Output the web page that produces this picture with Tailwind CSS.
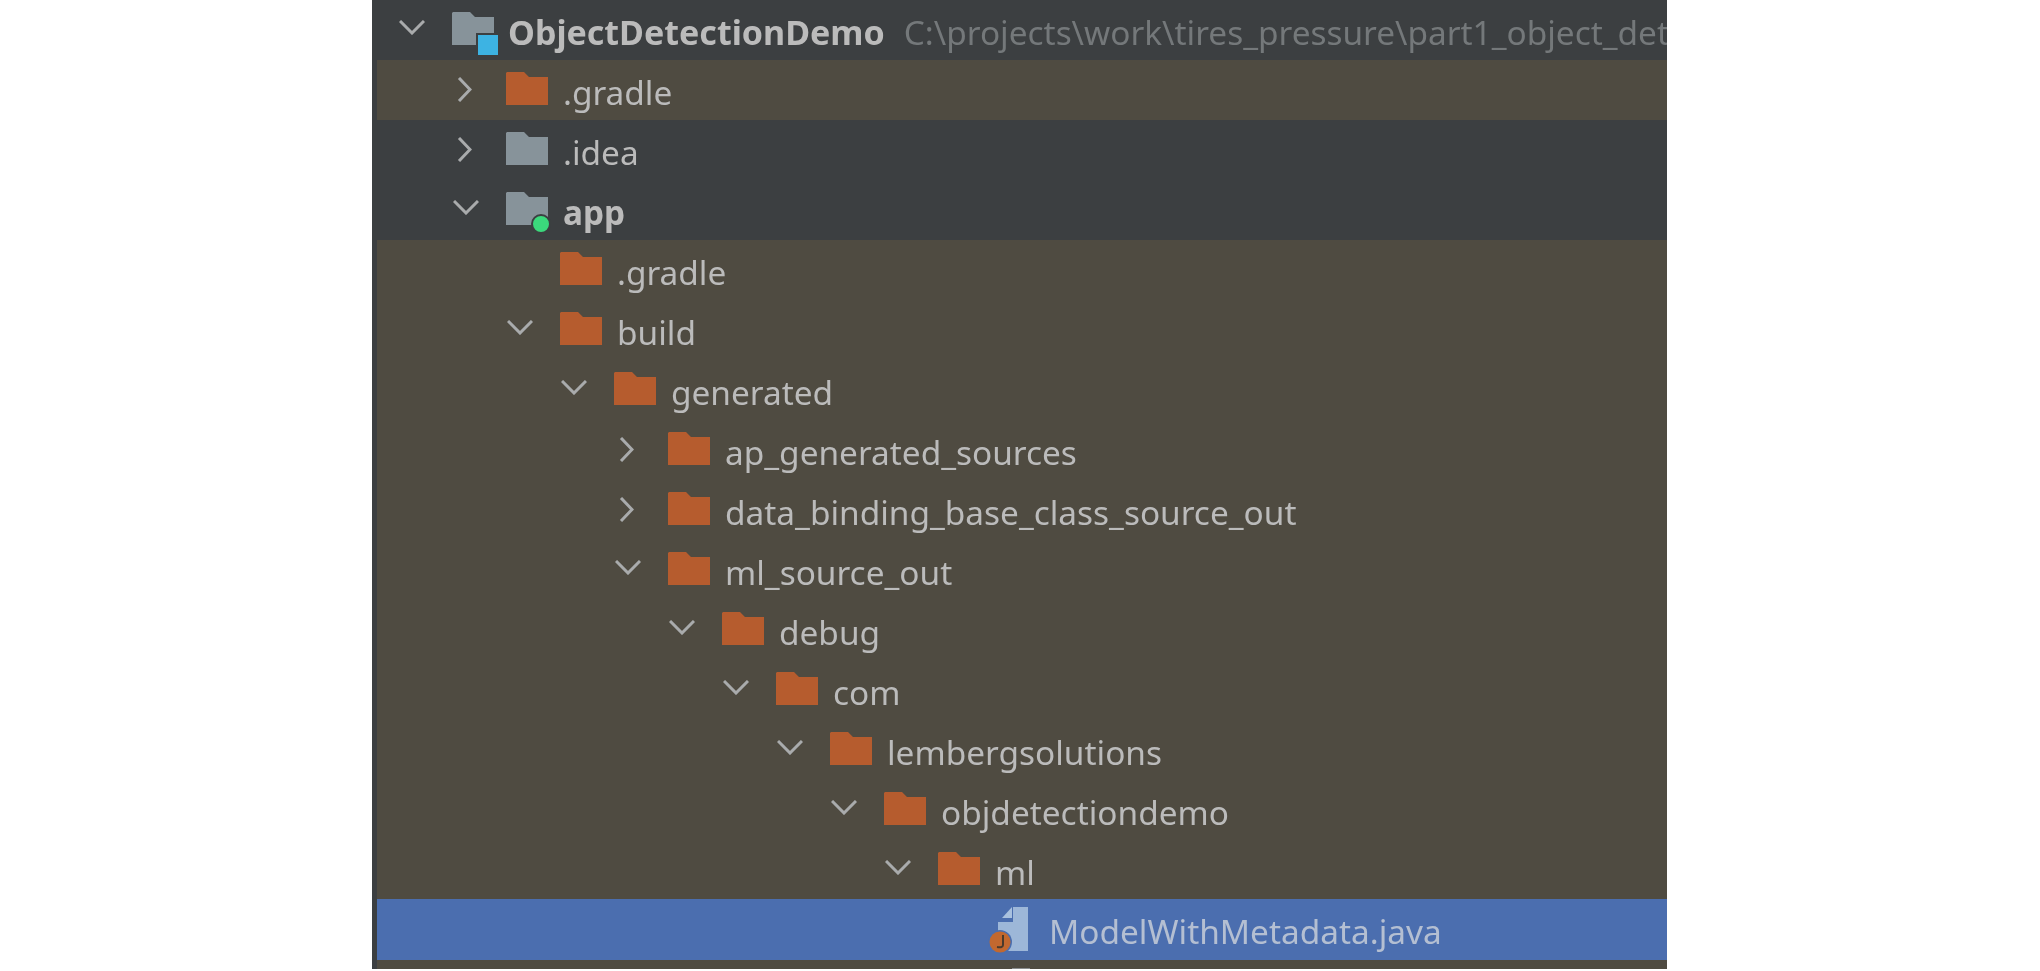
<!DOCTYPE html>
<html><head><meta charset="utf-8"><script src="https://cdn.jsdelivr.net/npm/@tailwindcss/browser@4"></script></head>
<body class="bg-white">
<svg width="0" height="0" class="absolute"><defs>
<symbol id="f" viewBox="0 0 42 33"><path d="M1 0H18L23 5H42V33H0V1Z"/></symbol>
<symbol id="r" viewBox="0 0 15 25"><path d="M2 1L13 12.500L2 24" fill="none" stroke="#a9abac" stroke-width="3"/></symbol>
<symbol id="d" viewBox="0 0 26 15"><path d="M1 1L13 13L25 1" fill="none" stroke="#a9abac" stroke-width="3"/></symbol>
</defs></svg>
<main class="ml-[372px] w-[1295px] h-[969px] overflow-hidden bg-[#4f4b41] border-l-[5px] border-[#3c3f41] font-['Noto_Sans',sans-serif] text-[33.4px] leading-[64px] text-[#bbbbbb] blur-[0.7px]">
 <div class="flex h-[60px] pl-[21px] bg-[#3c3f41] whitespace-nowrap">
  <div class="w-[54px] shrink-0 pt-[20px]"><svg class="w-[26px] h-[15px] ml-[1px]"><use href="#d"/></svg></div>
  <div class="relative w-[56px] shrink-0 pt-[12px]"><svg class="w-[42px] h-[33px] fill-[#87939a]"><use href="#f"/></svg><span class="absolute left-[24px] top-[33px] w-[24px] h-[24px] bg-[#3db3e3] border-2 border-[#3c3f41]"></span></div>
  <span class="font-bold text-[34px]">ObjectDetectionDemo</span><span class="ml-[19px] text-[#74787a]">C:\projects\work\tires_pressure\part1_object_det</span>
 </div>
 <div class="flex h-[60px] pl-[75px]">
  <div class="w-[54px] shrink-0 pt-[17px]"><svg class="w-[15px] h-[25px] ml-[5px]"><use href="#r"/></svg></div>
  <div class="w-[57px] shrink-0 pt-[12px]"><svg class="w-[42px] h-[33px] fill-[#b65c2e]"><use href="#f"/></svg></div><span>.gradle</span>
 </div>
 <div class="flex h-[60px] pl-[75px] bg-[#3c3f41]">
  <div class="w-[54px] shrink-0 pt-[17px]"><svg class="w-[15px] h-[25px] ml-[5px]"><use href="#r"/></svg></div>
  <div class="w-[57px] shrink-0 pt-[12px]"><svg class="w-[42px] h-[33px] fill-[#87939a]"><use href="#f"/></svg></div><span>.idea</span>
 </div>
 <div class="flex h-[60px] pl-[75px] bg-[#3c3f41]">
  <div class="w-[54px] shrink-0 pt-[20px]"><svg class="w-[26px] h-[15px] ml-[1px]"><use href="#d"/></svg></div>
  <div class="relative w-[57px] shrink-0 pt-[12px]"><svg class="w-[42px] h-[33px] fill-[#87939a]"><use href="#f"/></svg><span class="absolute left-[25px] top-[34px] w-[20px] h-[20px] rounded-full bg-[#3bd97c] border-2 border-[#3c3f41]"></span></div><span class="font-bold">app</span>
 </div>
 <div class="flex h-[60px] pl-[183px]"><div class="w-[57px] shrink-0 pt-[12px]"><svg class="w-[42px] h-[33px] fill-[#b65c2e]"><use href="#f"/></svg></div><span>.gradle</span></div>
 <div class="flex h-[60px] pl-[129px]"><div class="w-[54px] shrink-0 pt-[20px]"><svg class="w-[26px] h-[15px] ml-[1px]"><use href="#d"/></svg></div><div class="w-[57px] shrink-0 pt-[12px]"><svg class="w-[42px] h-[33px] fill-[#b65c2e]"><use href="#f"/></svg></div><span>build</span></div>
 <div class="flex h-[60px] pl-[183px]"><div class="w-[54px] shrink-0 pt-[20px]"><svg class="w-[26px] h-[15px] ml-[1px]"><use href="#d"/></svg></div><div class="w-[57px] shrink-0 pt-[12px]"><svg class="w-[42px] h-[33px] fill-[#b65c2e]"><use href="#f"/></svg></div><span>generated</span></div>
 <div class="flex h-[60px] pl-[237px]"><div class="w-[54px] shrink-0 pt-[17px]"><svg class="w-[15px] h-[25px] ml-[5px]"><use href="#r"/></svg></div><div class="w-[57px] shrink-0 pt-[12px]"><svg class="w-[42px] h-[33px] fill-[#b65c2e]"><use href="#f"/></svg></div><span>ap_generated_sources</span></div>
 <div class="flex h-[60px] pl-[237px]"><div class="w-[54px] shrink-0 pt-[17px]"><svg class="w-[15px] h-[25px] ml-[5px]"><use href="#r"/></svg></div><div class="w-[57px] shrink-0 pt-[12px]"><svg class="w-[42px] h-[33px] fill-[#b65c2e]"><use href="#f"/></svg></div><span>data_binding_base_class_source_out</span></div>
 <div class="flex h-[60px] pl-[237px]"><div class="w-[54px] shrink-0 pt-[20px]"><svg class="w-[26px] h-[15px] ml-[1px]"><use href="#d"/></svg></div><div class="w-[57px] shrink-0 pt-[12px]"><svg class="w-[42px] h-[33px] fill-[#b65c2e]"><use href="#f"/></svg></div><span>ml_source_out</span></div>
 <div class="flex h-[60px] pl-[291px]"><div class="w-[54px] shrink-0 pt-[20px]"><svg class="w-[26px] h-[15px] ml-[1px]"><use href="#d"/></svg></div><div class="w-[57px] shrink-0 pt-[12px]"><svg class="w-[42px] h-[33px] fill-[#b65c2e]"><use href="#f"/></svg></div><span>debug</span></div>
 <div class="flex h-[60px] pl-[345px]"><div class="w-[54px] shrink-0 pt-[20px]"><svg class="w-[26px] h-[15px] ml-[1px]"><use href="#d"/></svg></div><div class="w-[57px] shrink-0 pt-[12px]"><svg class="w-[42px] h-[33px] fill-[#b65c2e]"><use href="#f"/></svg></div><span>com</span></div>
 <div class="flex h-[60px] pl-[399px]"><div class="w-[54px] shrink-0 pt-[20px]"><svg class="w-[26px] h-[15px] ml-[1px]"><use href="#d"/></svg></div><div class="w-[57px] shrink-0 pt-[12px]"><svg class="w-[42px] h-[33px] fill-[#b65c2e]"><use href="#f"/></svg></div><span>lembergsolutions</span></div>
 <div class="flex h-[60px] pl-[453px]"><div class="w-[54px] shrink-0 pt-[20px]"><svg class="w-[26px] h-[15px] ml-[1px]"><use href="#d"/></svg></div><div class="w-[57px] shrink-0 pt-[12px]"><svg class="w-[42px] h-[33px] fill-[#b65c2e]"><use href="#f"/></svg></div><span>objdetectiondemo</span></div>
 <div class="flex h-[59px] pl-[507px]"><div class="w-[54px] shrink-0 pt-[20px]"><svg class="w-[26px] h-[15px] ml-[1px]"><use href="#d"/></svg></div><div class="w-[57px] shrink-0 pt-[12px]"><svg class="w-[42px] h-[33px] fill-[#b65c2e]"><use href="#f"/></svg></div><span>ml</span></div>
 <div class="flex h-[61px] pl-[611px] bg-[#4b6eaf] text-[#b4bfd2]">
  <div class="w-[61px] shrink-0 pt-[8px]"><svg class="w-[41px] h-[48px]" viewBox="0 0 41 48"><path d="M25 0H40V44H10V15H25Z" fill="#9db7d8"/><path d="M24 0V11H14Z" fill="#a9c1de"/><circle cx="12" cy="35" r="12" fill="#4b6eaf"/><circle cx="12" cy="35" r="10.500" fill="#c2682f"/><path d="M15 28V38Q15 41 9 40" fill="none" stroke="#4a3a2c" stroke-width="2"/></svg></div><span>ModelWithMetadata.java</span>
 </div>
 <div class="pl-[635px] pt-[8px]"><div class="w-[18px] h-[4px] bg-[#8a8d8e]"></div></div>
</main>
</body></html>
